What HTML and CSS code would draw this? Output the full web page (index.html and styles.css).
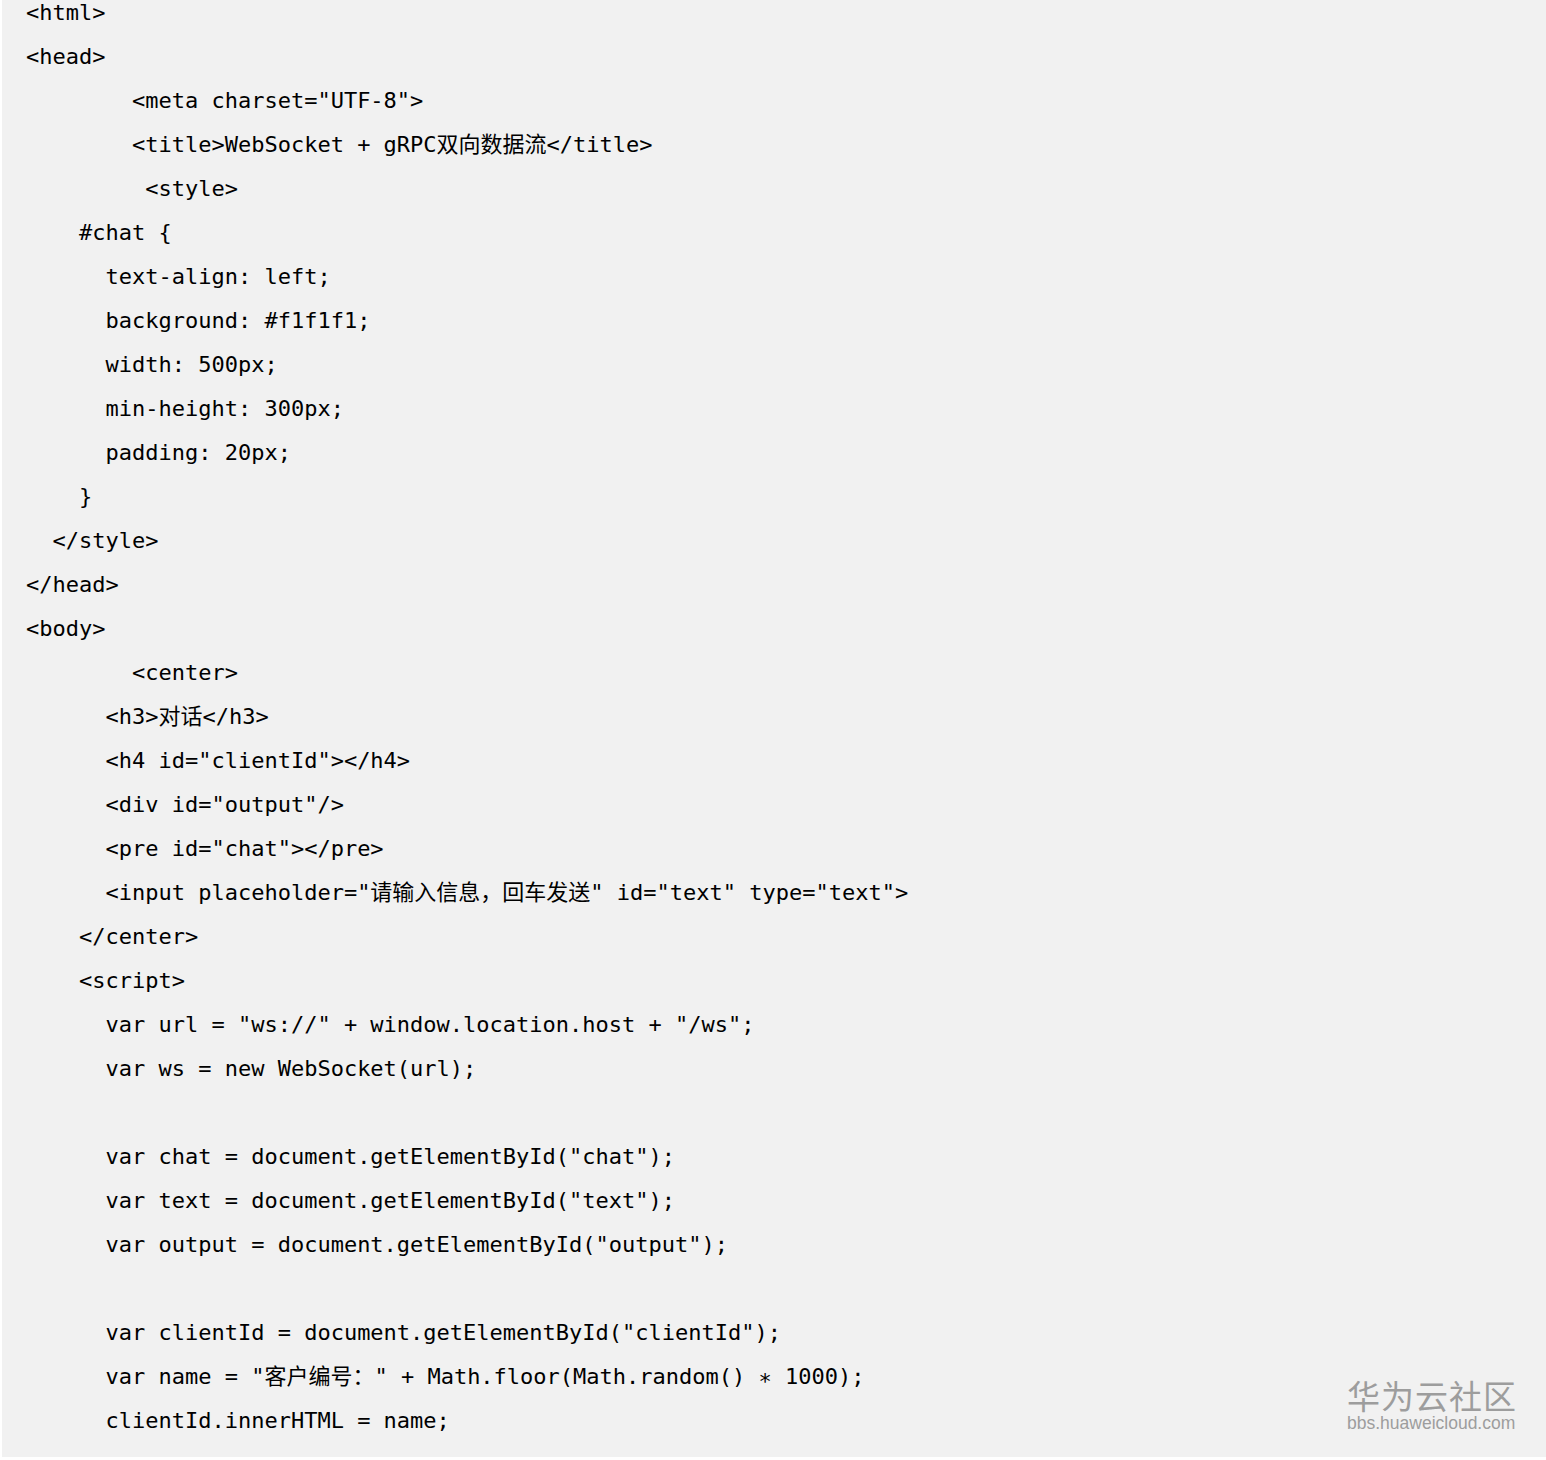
FILE: index.html
```html
<!DOCTYPE html>
<html>
<head>
<meta charset="UTF-8">
<title>code</title>
<link rel="stylesheet" href="styles.css">
</head>
<body>
<div class="frame">
<div class="codebox">
<pre class="code">&lt;html&gt;
&lt;head&gt;
        &lt;meta charset="UTF-8"&gt;
        &lt;title&gt;WebSocket + gRPC双向数据流&lt;/title&gt;
         &lt;style&gt;
    #chat {
      text-align: left;
      background: #f1f1f1;
      width: 500px;
      min-height: 300px;
      padding: 20px;
    }
  &lt;/style&gt;
&lt;/head&gt;
&lt;body&gt;
        &lt;center&gt;
      &lt;h3&gt;对话&lt;/h3&gt;
      &lt;h4 id="clientId"&gt;&lt;/h4&gt;
      &lt;div id="output"/&gt;
      &lt;pre id="chat"&gt;&lt;/pre&gt;
      &lt;input placeholder="请输入信息，回车发送" id="text" type="text"&gt;
    &lt;/center&gt;
    &lt;script&gt;
      var url = "ws://" + window.location.host + "/ws";
      var ws = new WebSocket(url);

      var chat = document.getElementById("chat");
      var text = document.getElementById("text");
      var output = document.getElementById("output");

      var clientId = document.getElementById("clientId");
      var name = "客户编号：" + Math.floor(Math.random() <span class="ast">*</span> 1000);
      clientId.innerHTML = name;</pre>
</div>
<div class="mark">
  <div class="mark-cn">华为云社区</div>
  <div class="mark-en">bbs.huaweicloud.com</div>
</div>
</div>
</body>
</html>
```

FILE: styles.css
```css
html, body {
  margin: 0;
  padding: 0;
  background: #ffffff;
}

.frame {
  position: relative;
  width: 1546px;
  height: 1460px;
  overflow: hidden;
  background: #ffffff;
}

.codebox {
  margin-left: 2px;
  height: 1457px;
  background: #f1f1f1;
  padding-left: 24px;
  overflow: hidden;
  box-sizing: border-box;
}

.code {
  margin: -9px 0 0 0;
  font-family: "DejaVu Sans Mono", "Noto Sans CJK SC", monospace;
  font-size: 22px;
  line-height: 44px;
  color: #000000;
  white-space: pre;
}

.ast {
  vertical-align: -5px;
  line-height: 22px;
}

.mark {
  position: absolute;
  left: 1347px;
  top: 1376px;
  color: #9d9d9d;
}

.mark-cn {
  font-family: "Noto Sans CJK SC", sans-serif;
  font-size: 33px;
  line-height: 38px;
  letter-spacing: 1px;
  font-weight: 400;
}

.mark-en {
  font-family: "Liberation Sans", Arial, sans-serif;
  font-size: 17.5px;
  line-height: 18px;
}
```
